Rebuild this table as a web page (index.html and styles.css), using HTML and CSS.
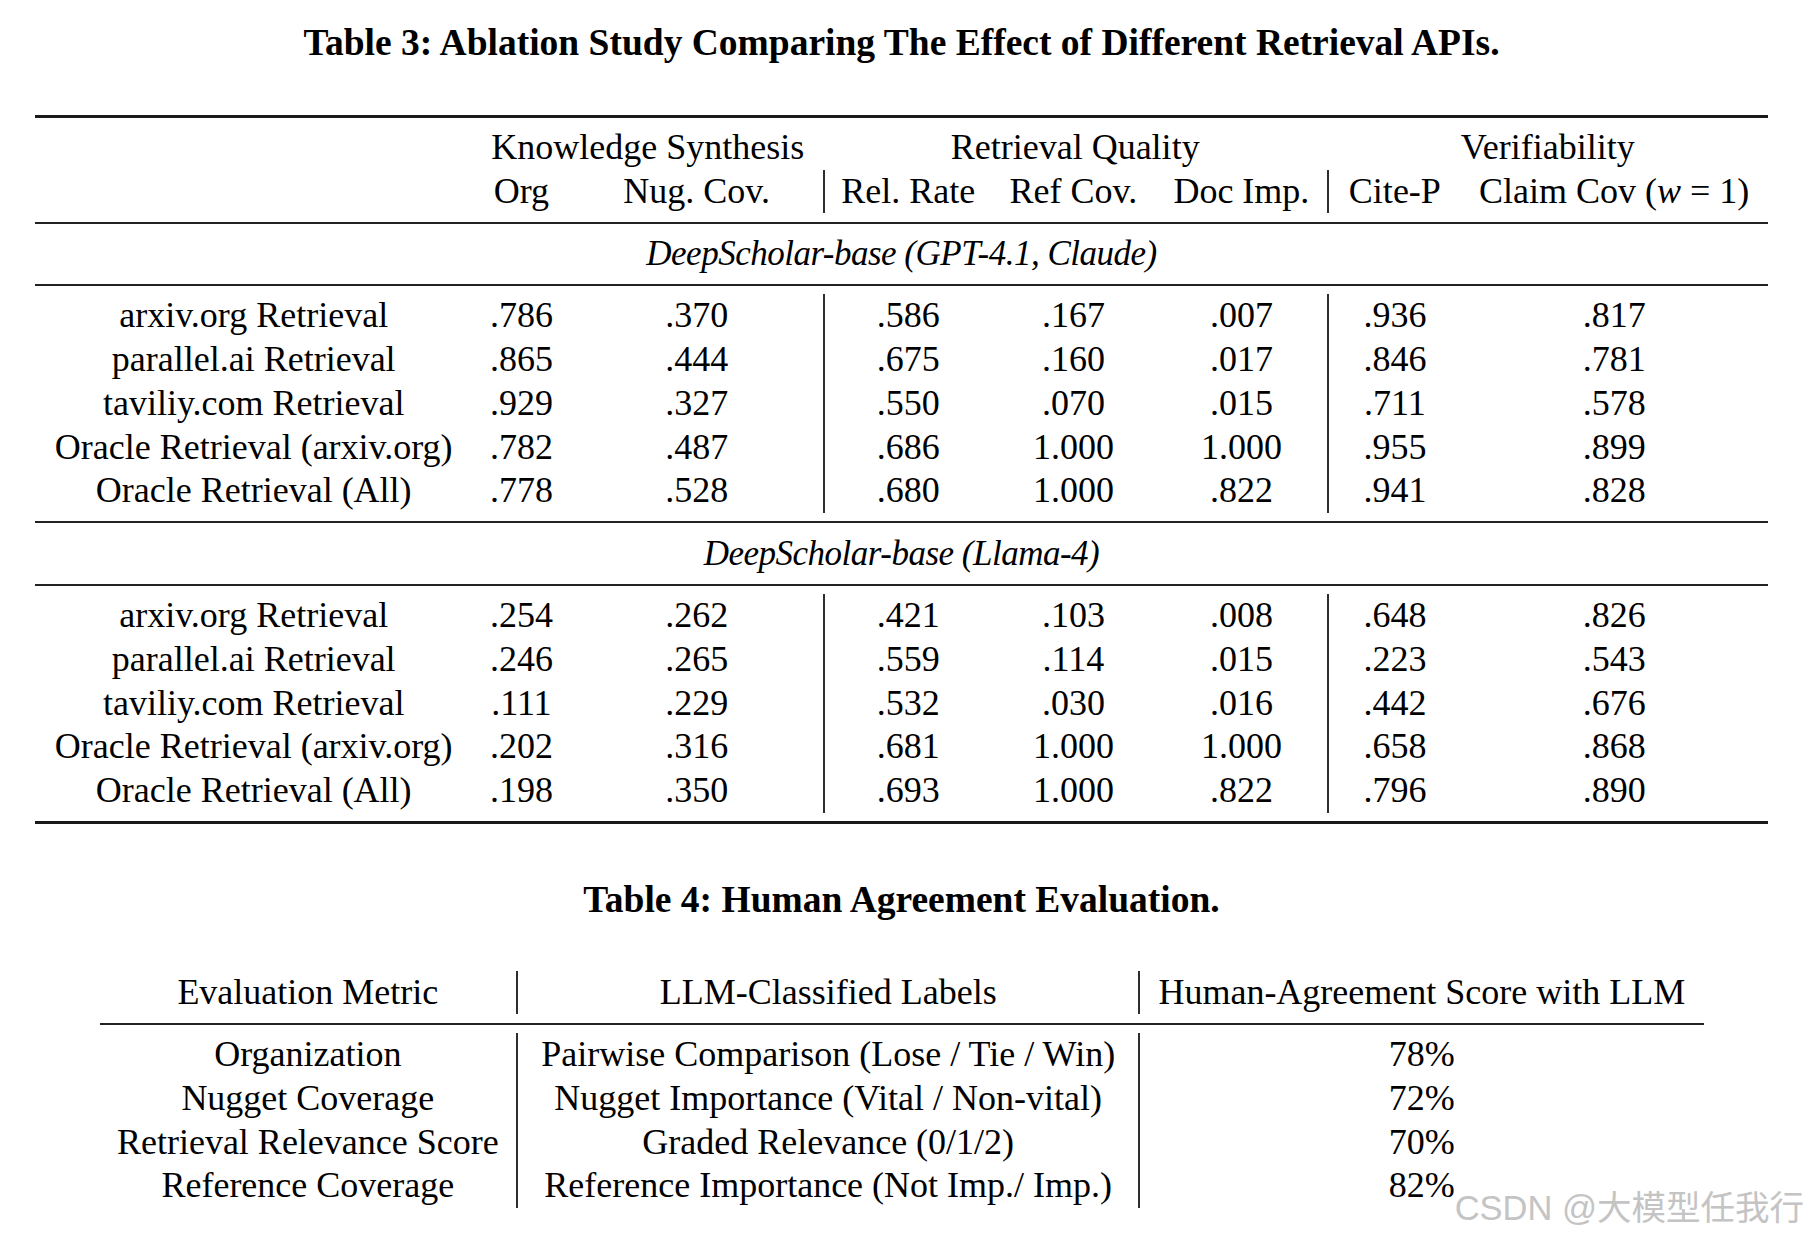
FILE: index.html
```html
<!DOCTYPE html>
<html lang="en">
<head>
<meta charset="utf-8">
<title>Table 3 and Table 4</title>
<link rel="stylesheet" href="styles.css">
</head>
<body>
<main class="page">
  <h2 class="caption cap3">Table 3: Ablation Study Comparing The Effect of Different Retrieval APIs.</h2>
  <table class="tbl t3">
    <colgroup>
      <col class="c-label"><col class="c-org"><col class="c-nug"><col class="c-rel"><col class="c-ref"><col class="c-doc"><col class="c-cite"><col class="c-claim">
    </colgroup>
    <thead>
      <tr class="sep"><td colspan="8" class="sep-top"><div class="rule heavy"></div></td></tr>
      <tr class="row"><td></td><td colspan="2">Knowledge Synthesis</td><td colspan="3">Retrieval Quality</td><td colspan="2">Verifiability</td></tr>
      <tr class="row"><td></td><td>Org</td><td>Nug. Cov.</td><td class="vl">Rel. Rate</td><td>Ref Cov.</td><td>Doc Imp.</td><td class="vl">Cite-P</td><td>Claim Cov (<i>w</i> = 1)</td></tr>
      <tr class="sep"><td colspan="8" class="sep-mid"><div class="rule"></div></td></tr>
    </thead>
    <tbody>
      <tr class="row"><td colspan="8" class="group">DeepScholar-base (GPT-4.1, Claude)</td></tr>
      <tr class="sep"><td colspan="8" class="sep-mid"><div class="rule"></div></td></tr>
      <tr class="row"><td>arxiv.org Retrieval</td><td>.786</td><td>.370</td><td class="vl">.586</td><td>.167</td><td>.007</td><td class="vl">.936</td><td>.817</td></tr>
      <tr class="row"><td>parallel.ai Retrieval</td><td>.865</td><td>.444</td><td class="vl">.675</td><td>.160</td><td>.017</td><td class="vl">.846</td><td>.781</td></tr>
      <tr class="row"><td>taviliy.com Retrieval</td><td>.929</td><td>.327</td><td class="vl">.550</td><td>.070</td><td>.015</td><td class="vl">.711</td><td>.578</td></tr>
      <tr class="row"><td>Oracle Retrieval (arxiv.org)</td><td>.782</td><td>.487</td><td class="vl">.686</td><td>1.000</td><td>1.000</td><td class="vl">.955</td><td>.899</td></tr>
      <tr class="row"><td>Oracle Retrieval (All)</td><td>.778</td><td>.528</td><td class="vl">.680</td><td>1.000</td><td>.822</td><td class="vl">.941</td><td>.828</td></tr>
      <tr class="sep"><td colspan="8" class="sep-mid"><div class="rule"></div></td></tr>
    </tbody>
    <tbody>
      <tr class="row"><td colspan="8" class="group">DeepScholar-base (Llama-4)</td></tr>
      <tr class="sep"><td colspan="8" class="sep-mid"><div class="rule"></div></td></tr>
      <tr class="row"><td>arxiv.org Retrieval</td><td>.254</td><td>.262</td><td class="vl">.421</td><td>.103</td><td>.008</td><td class="vl">.648</td><td>.826</td></tr>
      <tr class="row"><td>parallel.ai Retrieval</td><td>.246</td><td>.265</td><td class="vl">.559</td><td>.114</td><td>.015</td><td class="vl">.223</td><td>.543</td></tr>
      <tr class="row"><td>taviliy.com Retrieval</td><td>.111</td><td>.229</td><td class="vl">.532</td><td>.030</td><td>.016</td><td class="vl">.442</td><td>.676</td></tr>
      <tr class="row"><td>Oracle Retrieval (arxiv.org)</td><td>.202</td><td>.316</td><td class="vl">.681</td><td>1.000</td><td>1.000</td><td class="vl">.658</td><td>.868</td></tr>
      <tr class="row"><td>Oracle Retrieval (All)</td><td>.198</td><td>.350</td><td class="vl">.693</td><td>1.000</td><td>.822</td><td class="vl">.796</td><td>.890</td></tr>
      <tr class="sep"><td colspan="8" class="sep-bottom"><div class="rule heavy"></div></td></tr>
    </tbody>
  </table>

  <h2 class="caption cap4">Table 4: Human Agreement Evaluation.</h2>
  <table class="tbl t4">
    <colgroup>
      <col class="c4-metric"><col class="c4-labels"><col class="c4-score">
    </colgroup>
    <thead>
      <tr class="row"><td>Evaluation Metric</td><td class="vl">LLM-Classified Labels</td><td class="vl">Human-Agreement Score with LLM</td></tr>
      <tr class="sep"><td colspan="3" class="sep-mid"><div class="rule"></div></td></tr>
    </thead>
    <tbody>
      <tr class="row"><td>Organization</td><td class="vl">Pairwise Comparison (Lose / Tie / Win)</td><td class="vl">78%</td></tr>
      <tr class="row"><td>Nugget Coverage</td><td class="vl">Nugget Importance (Vital / Non-vital)</td><td class="vl">72%</td></tr>
      <tr class="row"><td>Retrieval Relevance Score</td><td class="vl">Graded Relevance (0/1/2)</td><td class="vl">70%</td></tr>
      <tr class="row"><td>Reference Coverage</td><td class="vl">Reference Importance (Not Imp./ Imp.)</td><td class="vl">82%</td></tr>
    </tbody>
  </table>
</main>
<div class="watermark">CSDN @大模型任我行</div>
</body>
</html>
```

FILE: styles.css
```css
html, body {
  margin: 0;
  padding: 0;
  background: #ffffff;
}

body {
  position: relative;
  min-height: 1242px;
  font-family: "Liberation Serif", "Times New Roman", serif;
  color: #000000;
}

.page {
  width: 1733px;
  margin-left: 35px;
  padding-top: 21px;
}

.caption {
  margin: 0;
  font-size: 37.5px;
  font-weight: 700;
  line-height: 44px;
  text-align: center;
}

.cap3 {
  margin-bottom: 50px;
}

.cap4 {
  margin-top: 54px;
  margin-bottom: 49px;
}

.tbl {
  border-collapse: separate;
  border-spacing: 0;
  table-layout: fixed;
  font-size: 36px;
}

.tbl td {
  padding: 0;
  text-align: center;
  white-space: nowrap;
}

.row td {
  height: 43.8px;
  line-height: 43.8px;
}

.vl {
  border-left: 2px solid #2e2e2e;
}

.tbl .group {
  font-style: italic;
  font-size: 35px;
  letter-spacing: -0.5px;
}

.tbl .sep-mid {
  padding: 8.25px 0;
}

.tbl .sep-top {
  padding: 0 0 7.75px;
}

.tbl .sep-bottom {
  padding: 7.75px 0 0;
}

.rule {
  height: 2px;
  background: #222222;
}

.rule.heavy {
  height: 3px;
  background: #1a1a1a;
}

/* Table 3 columns */
.t3 { width: 1733px; }
.c-label { width: 437.4px; }
.c-org   { width: 98px; }
.c-nug   { width: 252.6px; }
.c-rel   { width: 168.4px; }
.c-ref   { width: 164px; }
.c-doc   { width: 172px; }
.c-cite  { width: 133px; }
.c-claim { width: 307.6px; }

/* Table 4 columns */
.t4 {
  width: 1604px;
  margin: 0 auto;
}
.c4-metric { width: 416.7px; }
.c4-labels { width: 622px; }
.c4-score  { width: 565.3px; }

.watermark {
  position: absolute;
  top: 1187px;
  right: 5px;
  font-family: "Liberation Sans", "Noto Sans CJK SC", sans-serif;
  font-size: 34.5px;
  line-height: 42px;
  color: #c4c4c4;
  white-space: nowrap;
}
```
